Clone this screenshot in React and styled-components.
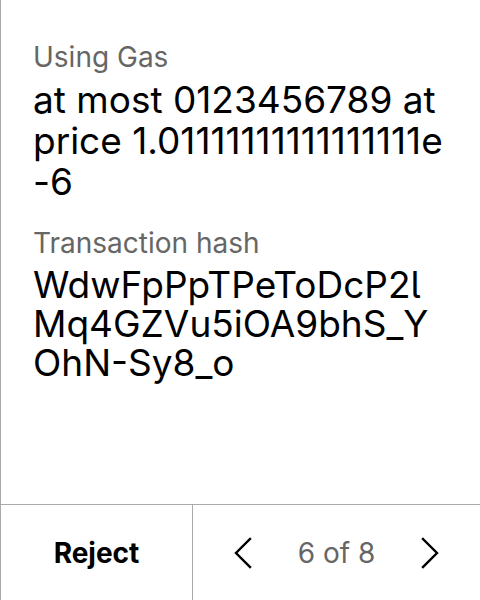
import React from "react";
import styled, { createGlobalStyle } from "styled-components";

const GlobalStyle = createGlobalStyle`
  html, body {
    margin: 0;
    padding: 0;
    background: #fff;
  }

  body {
    font-family: Inter, "Noto Sans", sans-serif;
    font-feature-settings: "cv05";
    color: #000;
  }
`;

function ChevronIcon({ dir }) {
  const points = dir === "left" ? "17,2 3,16 17,30" : "3,2 17,16 3,30";
  return (
    <svg width="20" height="32" viewBox="0 0 20 32" fill="none">
      <polyline
        points={points}
        stroke="#000"
        strokeWidth="2.4"
        strokeLinecap="square"
        strokeLinejoin="miter"
      />
    </svg>
  );
}

function App() {
  return (
    <>
      <GlobalStyle />
      <Panel>
        <Details>
          <Field>
            <Label>Using Gas</Label>
            <Value>at most 0123456789 at price 1.01111111111111111e-6</Value>
          </Field>
          <Field>
            <Label>Transaction hash</Label>
            <Value $lineHeight={39}>
              WdwFpPpTPeToDcP2lMq4GZVu5iOA9bhS_YOhN-Sy8_o
            </Value>
          </Field>
        </Details>
        <Footer>
          <RejectButton>Reject</RejectButton>
          <Pager>
            <ArrowButton aria-label="Previous">
              <ChevronIcon dir="left" />
            </ArrowButton>
            <Count>6 of 8</Count>
            <ArrowButton aria-label="Next">
              <ChevronIcon dir="right" />
            </ArrowButton>
          </Pager>
        </Footer>
      </Panel>
    </>
  );
}

const Panel = styled.div`
  height: 600px;
  display: flex;
  flex-direction: column;
  border-left: 1px solid #aaa;
  box-sizing: border-box;
`;

const Details = styled.div`
  flex: 1;
  display: flex;
  flex-direction: column;
  gap: 24px;
  padding: 40px 32px 0 32px;
`;

const Field = styled.div`
  display: flex;
  flex-direction: column;
  gap: 5px;
`;

const Label = styled.div`
  font-size: 28px;
  line-height: 34px;
  color: #666;
`;

const Value = styled.div`
  font-size: 37px;
  line-height: ${(p) => p.$lineHeight || 41}px;
  word-break: break-all;
`;

const Footer = styled.div`
  height: 96px;
  box-sizing: border-box;
  flex-shrink: 0;
  display: grid;
  grid-template-columns: 192px 1fr;
  border-top: 1px solid #aaa;
`;

const RejectButton = styled.button`
  border: none;
  border-right: 1px solid #aaa;
  background: none;
  font-family: Inter, sans-serif;
  font-feature-settings: "cv05";
  font-size: 28px;
  font-weight: 700;
  color: #000;
  padding: 0;
`;

const Pager = styled.div`
  display: flex;
  align-items: center;
  justify-content: space-between;
  padding: 0 40px;
`;

const ArrowButton = styled.button`
  border: none;
  background: none;
  padding: 0;
  display: flex;
`;

const Count = styled.span`
  font-size: 28px;
  color: #666;
`;

export default App;
